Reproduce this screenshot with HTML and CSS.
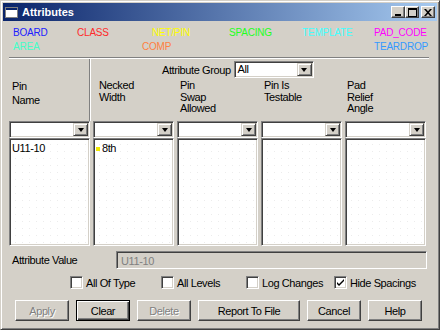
FILE: index.html
```html
<!DOCTYPE html>
<html lang="en">
<head>
    <meta charset="UTF-8">
    <title>Attributes</title>
    <link rel="stylesheet" href="styles.css">
</head>
<body>
<div class="window">
    <div class="titlebar">
        <svg class="app-icon" width="13" height="11" viewBox="0 0 13 11">
            <rect x="0.5" y="0.5" width="12" height="10" fill="#fff" stroke="#808080"/>
            <rect x="1" y="1" width="11" height="2" fill="#0a246a"/>
        </svg>
        <span class="title">Attributes</span>
        <div class="caption-buttons">
            <span class="cap"><svg width="8" height="7" viewBox="0 0 8 7"><rect x="1" y="5" width="6" height="2" fill="#000"/></svg></span>
            <span class="cap"><svg width="9" height="9" viewBox="0 0 9 9"><rect x="0.5" y="0.5" width="8" height="8" fill="none" stroke="#000"/><rect x="0" y="0" width="9" height="2" fill="#000"/></svg></span>
            <span class="cap close"><svg width="8" height="7" viewBox="0 0 8 7"><path d="M0 0h2l2 2.2L6 0h2L5 3.5 8 7H6L4 4.8 2 7H0l3-3.5z" fill="#000"/></svg></span>
        </div>
    </div>

    <div class="classes">
        <span class="c-board">BOARD</span>
        <span class="c-class">CLASS</span>
        <span class="c-netpin">NET/PIN</span>
        <span class="c-spacing">SPACING</span>
        <span class="c-template">TEMPLATE</span>
        <span class="c-padcode">PAD_CODE</span>
        <span class="c-area">AREA</span>
        <span></span>
        <span class="c-comp">COMP</span>
        <span></span>
        <span></span>
        <span class="c-teardrop">TEARDROP</span>
    </div>

    <div class="rule"></div>

    <div class="panel">
        <div class="head">
            <div class="pin-head">Pin<br>Name</div>
            <div class="right-head">
                <div class="group-row">
                    <span>Attribute Group</span>
                    <div class="combo group-combo"><span class="combo-text">All</span><span class="drop"></span></div>
                </div>
                <div class="col-heads">
                    <div class="col-head necked">Necked<br>Width</div>
                    <div class="col-head">Pin<br>Swap<br>Allowed</div>
                    <div class="col-head">Pin Is<br>Testable</div>
                    <div class="col-head pad">Pad<br>Relief<br>Angle</div>
                </div>
            </div>
        </div>

        <div class="grid">
            <div class="combo"><span class="combo-text"></span><span class="drop"></span></div>
            <div class="combo"><span class="combo-text"></span><span class="drop"></span></div>
            <div class="combo"><span class="combo-text"></span><span class="drop"></span></div>
            <div class="combo"><span class="combo-text"></span><span class="drop"></span></div>
            <div class="combo"><span class="combo-text"></span><span class="drop"></span></div>

            <div class="list"><div class="item">U11-10</div></div>
            <div class="list"><div class="item"><span class="mark"></span>8th</div></div>
            <div class="list"></div>
            <div class="list"></div>
            <div class="list"></div>
        </div>

        <div class="value-row">
            <span class="value-label">Attribute Value</span>
            <div class="value-field">U11-10</div>
        </div>

        <div class="checks">
            <label class="check"><span class="box"></span>All Of Type</label>
            <label class="check"><span class="box"></span>All Levels</label>
            <label class="check"><span class="box"></span>Log Changes</label>
            <label class="check"><span class="box"><svg width="9" height="9" viewBox="0 0 9 9"><path d="M1 4l2 2 5-5v2L3 8 1 6z" fill="#000"/></svg></span>Hide Spacings</label>
        </div>
    </div>

    <div class="buttons">
        <button class="btn disabled">Apply</button>
        <button class="btn default">Clear</button>
        <button class="btn disabled">Delete</button>
        <button class="btn wide">Report To File</button>
        <button class="btn">Cancel</button>
        <button class="btn">Help</button>
    </div>
</div>
</body>
</html>
```

FILE: styles.css
```css
html, body {
    margin: 0;
    padding: 0;
    overflow: hidden;
}

body {
    width: 440px;
    height: 330px;
    font-family: "Liberation Sans", Arial, sans-serif;
    font-size: 11px;
    letter-spacing: -0.4px;
    color: #000;
}

.window {
    box-sizing: border-box;
    width: 440px;
    height: 330px;
    padding: 1px;
    background-color: #d4d0c8;
    border: 1px solid;
    border-color: #d4d0c8 #404040 #404040 #d4d0c8;
    box-shadow: inset 1px 1px #fff, inset -1px -1px #808080;
}

/* title bar */
.titlebar {
    display: flex;
    align-items: center;
    height: 18px;
    margin: 1px 1px 0 1px;
    background: linear-gradient(to right, #0a246a, #a6caf0);
    color: #fff;
}

.app-icon {
    margin: 0 4px 0 2px;
}

.title {
    font-weight: bold;
    font-size: 11px;
    letter-spacing: 0;
    flex: 1;
}

.caption-buttons {
    display: flex;
    margin-right: 2px;
}

.cap {
    box-sizing: border-box;
    width: 14px;
    height: 12px;
    display: flex;
    align-items: center;
    justify-content: center;
    background: #d4d0c8;
    border: 1px solid;
    border-color: #fff #404040 #404040 #fff;
    box-shadow: inset -1px -1px #808080;
}

.cap.close {
    margin-left: 2px;
}

/* color classes */
.classes {
    display: grid;
    grid-template-columns: 64px 75px 77px 73px 72px 1fr;
    grid-auto-rows: 14px;
    padding: 5px 0 0 11px;
    font-size: 10px;
    letter-spacing: -0.2px;
    line-height: 14px;
}

.c-board { color: #2020ff; }
.c-class { color: #ff2a2a; }
.c-netpin { color: #ffff00; }
.c-spacing { color: #22ff22; }
.c-template { color: #44ffff; }
.c-padcode { color: #ff00ff; }
.c-area { color: #44ffc8; }
.c-comp { color: #ff8040; margin-left: -10px; }
.c-teardrop { color: #3399ff; }

.rule {
    margin: 3px 9px 0 7px;
    border-top: 1px solid #808080;
    border-bottom: 1px solid #fff;
}

/* panel */
.panel {
    margin: 0 9px 0 7px;
}

.head {
    display: grid;
    grid-template-columns: 81px 1fr;
    height: 62px;
}

.pin-head {
    padding: 20px 0 0 3px;
    line-height: 14px;
    border-right: 1px solid #808080;
    box-shadow: 1px 0 0 #fff;
}

.group-row {
    display: flex;
    align-items: center;
    gap: 3px;
    margin-top: 2px;
    padding-left: 72px;
}

.col-heads {
    display: grid;
    grid-template-columns: repeat(4, 81px);
    column-gap: 3px;
    margin: 2px 0 0 3px;
    line-height: 11.5px;
}

.col-head {
    padding-left: 3px;
}

.col-head.necked {
    padding-left: 6px;
}

.col-head.pad {
    padding-left: 2px;
}

/* combos */
.combo {
    box-sizing: border-box;
    display: flex;
    height: 17px;
    background: #fff;
    border: 1px solid;
    border-color: #808080 #fff #fff #808080;
    box-shadow: inset 1px 1px #404040, inset -1px -1px #d4d0c8;
    padding: 1px;
}

.group-combo {
    width: 80px;
}

.combo-text {
    flex: 1;
    padding-left: 2px;
    line-height: 13px;
}

.drop {
    box-sizing: border-box;
    width: 15px;
    height: 13px;
    display: flex;
    align-items: center;
    justify-content: center;
    background: #d4d0c8;
    border: 1px solid;
    border-color: #d4d0c8 #404040 #404040 #d4d0c8;
    box-shadow: inset 1px 1px #fff, inset -1px -1px #808080;
}

.drop::after {
    content: "";
    border-top: 4px solid #000;
    border-left: 3.5px solid transparent;
    border-right: 3.5px solid transparent;
}

/* lists */
.grid {
    display: grid;
    grid-template-columns: repeat(5, 81px);
    grid-template-rows: 17px 108px;
    column-gap: 3px;
}

.list {
    box-sizing: border-box;
    border: 1px solid;
    border-color: #808080 #fff #fff #808080;
    box-shadow: inset 1px 1px #404040, inset -1px -1px #d4d0c8;
    background: #fff radial-gradient(circle, #ececec 0.7px, transparent 1px) 2px 2px / 7px 7px;
    padding: 3px 2px;
}

.item {
    display: flex;
    align-items: center;
    line-height: 13px;
}

.mark {
    width: 4px;
    height: 4px;
    background: #f0e800;
    margin-right: 2px;
}

/* attribute value */
.value-row {
    display: flex;
    align-items: center;
    margin-top: 5px;
}

.value-label {
    width: 104px;
    padding-left: 3px;
}

.value-field {
    box-sizing: border-box;
    width: 311px;
    height: 18px;
    line-height: 14px;
    padding: 2px 4px;
    color: #808080;
    border: 1px solid;
    border-color: #808080 #fff #fff #808080;
    box-shadow: inset 1px 1px #404040, inset -1px -1px #d4d0c8;
}

/* checks */
.checks {
    display: grid;
    grid-template-columns: 91px 85px 88px auto;
    margin-top: 7px;
    padding-left: 61px;
}

.check {
    display: flex;
    align-items: center;
    gap: 3px;
    height: 13px;
}

.box {
    box-sizing: border-box;
    width: 13px;
    height: 13px;
    display: flex;
    align-items: center;
    justify-content: center;
    background: #fff;
    border: 1px solid;
    border-color: #808080 #fff #fff #808080;
    box-shadow: inset 1px 1px #404040, inset -1px -1px #d4d0c8;
}

/* buttons */
.buttons {
    display: flex;
    gap: 7px;
    margin: 11px 0 0 13px;
}

.btn {
    box-sizing: border-box;
    width: 54px;
    height: 21px;
    padding: 0;
    font-family: inherit;
    font-size: 11px;
    letter-spacing: -0.4px;
    color: #000;
    background: #d4d0c8;
    border: 1px solid;
    border-color: #fff #404040 #404040 #fff;
    box-shadow: inset -1px -1px #808080;
}

.btn.wide {
    width: 102px;
}

.btn.default {
    border-color: #000;
    box-shadow: inset 1px 1px #fff, inset -1px -1px #404040, inset -2px -2px #808080;
}

.btn.disabled {
    color: #808080;
    text-shadow: 1px 1px #fff;
}
```
